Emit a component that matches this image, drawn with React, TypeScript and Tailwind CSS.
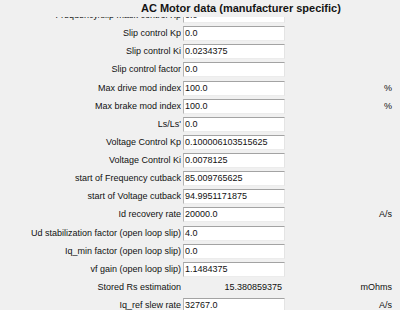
import React from 'react';

// AC Motor data panel - manufacturer specific parameters

type Row = {
  label: string;
  value: string;
  unit?: string;
  readOnly?: boolean;
};

const rows: Row[] = [
  { label: 'Frequency/slip mask control Kp', value: '0.0' },
  { label: 'Slip control Kp', value: '0.0' },
  { label: 'Slip control Ki', value: '0.0234375' },
  { label: 'Slip control factor', value: '0.0' },
  { label: 'Max drive mod index', value: '100.0', unit: '%' },
  { label: 'Max brake mod index', value: '100.0', unit: '%' },
  { label: "Ls/Ls'", value: '0.0' },
  { label: 'Voltage Control Kp', value: '0.100006103515625' },
  { label: 'Voltage Control Ki', value: '0.0078125' },
  { label: 'start of Frequency cutback', value: '85.009765625' },
  { label: 'start of Voltage cutback', value: '94.9951171875' },
  { label: 'Id recovery rate', value: '20000.0', unit: 'A/s' },
  { label: 'Ud stabilization factor (open loop slip)', value: '4.0' },
  { label: 'Iq_min factor (open loop slip)', value: '0.0' },
  { label: 'vf gain (open loop slip)', value: '1.1484375' },
  { label: 'Stored Rs estimation', value: '15.380859375', unit: 'mOhms', readOnly: true },
  { label: 'Iq_ref slew rate', value: '32767.0', unit: 'A/s' },
];

function ParamRow({ row }: { row: Row }) {
  return (
    <div className="flex items-center h-[15px]">
      <div className="w-[181px] shrink-0 text-right whitespace-nowrap overflow-hidden">{row.label}</div>
      {row.readOnly ? (
        <div className="ml-[2px] w-[99px] shrink-0 text-right">{row.value}</div>
      ) : (
        <div className="ml-[2px] w-[102px] h-[15px] shrink-0 bg-white border border-t-[#a3a3a3] border-l-[#b4b4b4] border-r-[#e4e4e4] border-b-[#ececec] pl-[1px] leading-[13px]">
          {row.value}
        </div>
      )}
      <div className="flex-1 text-right pr-[8px]">{row.unit ?? ''}</div>
    </div>
  );
}

export default function App() {
  return (
    <div
      className="w-[400px] h-[310px] bg-[#f0f0f0] text-[#111] overflow-hidden flex flex-col"
      style={{ fontFamily: '"Liberation Sans", Arial, sans-serif' }}
    >
      {/* Titel */}
      <div className="h-[17px] shrink-0 pl-[141px] pt-[1px] text-[11px] font-bold leading-[15px] text-[#141414] relative z-10 bg-[#f0f0f0]">
        AC Motor data (manufacturer specific)
      </div>

      {/* Scrollbereich */}
      <div className="flex-1 overflow-hidden">
        <div className="mt-[-9px] flex flex-col gap-[3.13px] text-[9px] leading-[15px]">
          {rows.map((row) => (
            <ParamRow key={row.label} row={row} />
          ))}
        </div>
      </div>
    </div>
  );
}
